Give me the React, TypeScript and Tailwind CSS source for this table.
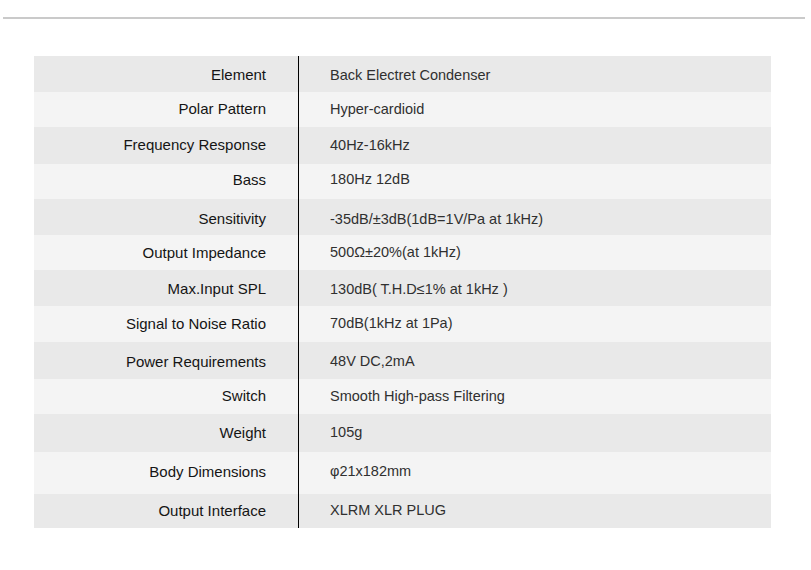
const specs: { label: string; value: string; h: string; nudge?: string }[] = [
  { label: "Element", value: "Back Electret Condenser", h: "h-[36px]", nudge: "pt-[3px]" },
  { label: "Polar Pattern", value: "Hyper-cardioid", h: "h-[35px]" },
  { label: "Frequency Response", value: "40Hz-16kHz", h: "h-[37px]" },
  { label: "Bass", value: "180Hz 12dB", h: "h-[35px]", nudge: "pb-[3px]" },
  { label: "Sensitivity", value: "-35dB/±3dB(1dB=1V/Pa at 1kHz)", h: "h-[36px]", nudge: "pt-[5px]" },
  { label: "Output Impedance", value: "500Ω±20%(at 1kHz)", h: "h-[35px]", nudge: "pt-[1px]" },
  { label: "Max.Input SPL", value: "130dB( T.H.D≤1% at 1kHz )", h: "h-[36px]", nudge: "pt-[3px]" },
  { label: "Signal to Noise Ratio", value: "70dB(1kHz at 1Pa)", h: "h-[36px]" },
  { label: "Power Requirements", value: "48V DC,2mA", h: "h-[37px]", nudge: "pt-[3px]" },
  { label: "Switch", value: "Smooth High-pass Filtering", h: "h-[35px]" },
  { label: "Weight", value: "105g", h: "h-[38px]" },
  { label: "Body Dimensions", value: "φ21x182mm", h: "h-[42px]", nudge: "pb-[2px]" },
  { label: "Output Interface", value: "XLRM XLR PLUG", h: "h-[34px]" },
];

export default function App() {
  return (
    <div className="w-[811px] h-[570px] bg-white font-['Liberation_Sans',Arial,sans-serif] overflow-hidden">
      <div className="pt-[17px] px-[3px]">
        <div className="h-[2px] w-[802px] bg-[#cacaca]" />
      </div>

      <div className="mt-[37px] ml-[34px] w-[737px] flex flex-col">
        {specs.map((row, i) => (
          <div
            key={row.label}
            className={`flex ${row.h} ${i % 2 === 0 ? "bg-[#e9e9e9]" : "bg-[#f4f4f4]"}`}
          >
            <div className={`w-[264px] flex items-center justify-end pr-[32px] text-[15px] text-[#151515] ${row.nudge ?? ""}`}>
              {row.label}
            </div>
            <div className={`flex-1 flex items-center border-l border-black pl-[31px] text-[14.5px] text-[#303030] ${row.nudge ?? ""}`}>
              {row.value}
            </div>
          </div>
        ))}
      </div>
    </div>
  );
}
